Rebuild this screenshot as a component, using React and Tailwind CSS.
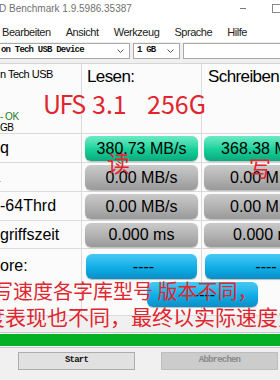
import React from 'react';

// AS SSD Benchmark window, cropped, with red annotation overlay

const Chevron = () => (
  <svg width="7" height="4" viewBox="0 0 7 4" className="shrink-0">
    <path d="M0.5 0.5 L3.5 3.5 L6.5 0.5" fill="none" stroke="#555" strokeWidth="1" />
  </svg>
);

const tones = {
  green: 'bg-linear-to-b from-[#6aeac6] via-[#1ad49d] to-[#0ba97c]',
  gray: 'bg-linear-to-b from-[#cacaca] via-[#b3b3b3] to-[#999999]',
  blue: 'bg-linear-to-b from-[#45c9f3] via-[#12b0e8] to-[#0a8fc8]',
};

const Pill = ({ tone, children, className = '' }) => (
  <div
    className={`rounded-[6px] flex items-center justify-center text-[16px] text-black shadow-[0_1px_1px_rgba(0,0,0,0.25)] ${tones[tone]} ${className}`}
  >
    {children}
  </div>
);

const rows = [
  { label: 'q', shift: '', read: '380.73 MB/s', write: '368.38 MB/s', tone: 'green', h: 'h-[29px]' },
  { label: '4K', shift: 'ml-[-19px]', read: '0.00 MB/s', write: '0.00 MB/s', tone: 'gray', h: 'h-[29px]' },
  { label: '-64Thrd', shift: '', read: '0.00 MB/s', write: '0.00 MB/s', tone: 'gray', h: 'h-[29px]' },
  { label: 'griffszeit', shift: '', read: '0.000 ms', write: '0.000 ms', tone: 'gray', h: 'h-[28px]' },
];

const menu = ['Bearbeiten', 'Ansicht', 'Werkzeug', 'Sprache', 'Hilfe'];

export default function App() {
  return (
    <div className="relative w-[280px] h-[380px] overflow-hidden bg-[#f0f0f0] font-['Liberation_Sans',Arial,sans-serif] text-black">
      {/* title bar */}
      <div className="relative h-[22px] bg-white flex items-center">
        <span className="text-[10px] text-[#707070] leading-none ml-[-1px] mt-[-4px]">D Benchmark 1.9.5986.35387</span>
        <div className="absolute left-[240px] top-[8px] w-[6px] h-px bg-[#777]" />
        <div className="absolute left-[272px] top-[4px] w-[9px] h-[9px] border border-[#888]" />
      </div>

      {/* menu */}
      <div className="h-[20px] bg-white flex items-center gap-[15px] pl-[2px] text-[11px] tracking-[-0.45px] text-[#222]">
        {menu.map((m) => (
          <span key={m}>{m}</span>
        ))}
      </div>

      {/* combo row */}
      <div className="h-[21px] bg-[#f0f0f0] flex items-start pt-px font-['Liberation_Mono',monospace] font-bold text-[9px] tracking-[-0.8px] text-[#111]">
        <div className="ml-[-1px] w-[131px] h-[16px] border border-[#a9a9a9] bg-white flex items-center justify-between pr-[5px]">
          <span className="ml-px">on Tech USB Device</span>
          <Chevron />
        </div>
        <div className="ml-[3px] w-[47px] h-[16px] border border-[#a9a9a9] bg-white flex items-center justify-between pl-[3px] pr-[5px]">
          <span>1 GB</span>
          <Chevron />
        </div>
        <div className="ml-[3px] flex-1 h-[16px] border border-[#a9a9a9] bg-white mr-[-4px]" />
      </div>

      {/* result grid */}
      <div className="w-[330px] bg-[#fbfbfb] border-t border-[#d6d6d6] grid grid-cols-[82px_120px_128px]">
        {/* header */}
        <div className="h-[70px] border-r border-b border-[#dadada] flex flex-col text-[11px] tracking-[-0.5px]">
          <span className="pt-[3px] leading-[14px]">n Tech USB</span>
          <div className="mt-auto leading-[11px] text-[10px]">
            <div className="text-[#1e7b1e]">- OK</div>
            <div>GB</div>
          </div>
        </div>
        <div className="h-[70px] border-r border-b border-[#dadada] pl-[5px] pt-0 text-[17px] tracking-[-0.6px]">
          Lesen:
        </div>
        <div className="h-[70px] border-b border-[#dadada] pl-[6px] pt-0 text-[17px] tracking-[-0.6px]">
          Schreiben:
        </div>

        {rows.map((r) => (
          <React.Fragment key={r.label}>
            <div className={`${r.h} border-r border-b border-[#dadada] flex items-center text-[16px] overflow-hidden`}>
              <span className={r.shift}>{r.label}</span>
            </div>
            <div className={`${r.h} border-r border-b border-[#dadada] px-[3px] pt-[2px] pb-px flex`}>
              <Pill tone={r.tone} className="flex-1">{r.read}</Pill>
            </div>
            <div className={`${r.h} border-b border-[#dadada] px-[2px] pt-[2px] pb-px flex`}>
              <Pill tone={r.tone} className="flex-1">{r.write}</Pill>
            </div>
          </React.Fragment>
        ))}

        {/* score row */}
        <div className="h-[67px] border-r border-b border-[#dadada] text-[16px] pt-[9px] leading-[16px]">ore:</div>
        <div className="h-[67px] border-r border-b border-[#dadada] px-[4px] pt-[5px]">
          <Pill tone="blue" className="h-[25px] pl-[4px]">----</Pill>
        </div>
        <div className="h-[67px] border-b border-[#dadada] px-[3px] pt-[5px]">
          <Pill tone="blue" className="h-[25px]">----</Pill>
        </div>
      </div>

      {/* progress bar */}
      <div className="mt-[16px] h-[16px] border-y border-[#c6c6c6] bg-[#f7f7f7] py-px">
        <div className="h-full bg-[#06b025]" />
      </div>

      {/* buttons */}
      <div className="flex mt-[4px] font-['Liberation_Mono',monospace] font-bold text-[9px] tracking-[-0.8px]">
        <button className="ml-[18px] w-[117px] h-[18px] border border-[#adadad] bg-[#e1e1e1] text-[#111] flex items-center justify-center">
          Start
        </button>
        <button className="ml-[26px] w-[117px] h-[18px] border border-[#bdbdbd] bg-[#cccccc] text-[#8a8a8a] flex items-center justify-center">
          Abbrechen
        </button>
      </div>

      {/* total score button lying over the grid */}
      <Pill tone="blue" className="absolute left-[147px] top-[282px] w-[111px] h-[25px] pl-[4px]">----</Pill>

      {/* red annotations */}
      <div className="absolute inset-0 pointer-events-none font-['Noto_Sans_CJK_SC',sans-serif] text-[#e0262f] leading-none">
        <span className="absolute left-[43px] top-[91px] text-[25px] tracking-[-1.5px]">UFS</span>
        <span className="absolute left-[92px] top-[91px] text-[25px]">3.1</span>
        <span className="absolute left-[147px] top-[91px] text-[25px]">256G</span>
        <span className="absolute left-[107px] top-[151px] text-[23px]">读</span>
        <span className="absolute left-[249px] top-[156px] text-[22px]">写</span>
        <span className="absolute left-[-7px] top-[281px] text-[20px] whitespace-nowrap">写速度各字库型号 版本不同，</span>
        <span className="absolute left-[-16px] top-[306px] text-[21px] whitespace-nowrap">度表现也不同，最终以实际速度为准</span>
      </div>
    </div>
  );
}
